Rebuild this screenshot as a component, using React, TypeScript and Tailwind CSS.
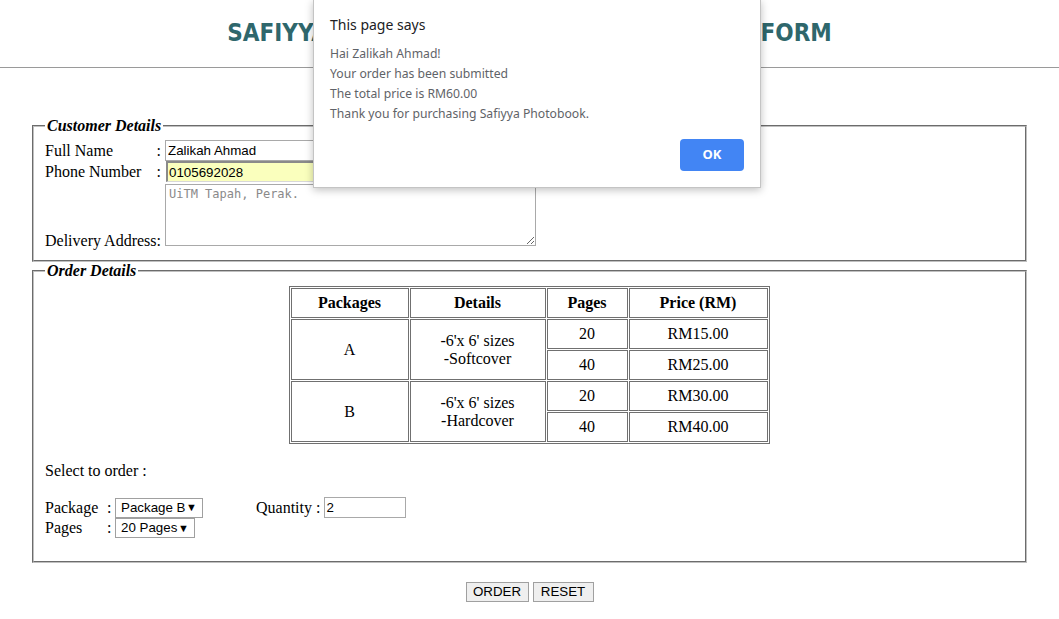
import React from "react";

const cell =
  "border border-[#707070] px-[5px] py-[5px] text-center leading-[18px] align-middle";

function FakeSelect({ label, width }: { label: string; width: string }) {
  return (
    <span
      className={`inline-flex h-[20px] items-center justify-between border border-[#a0a0a0] bg-white pl-[5px] pr-[5px] font-['Liberation_Sans',sans-serif] text-[13.33px] leading-none text-black ${width}`}
    >
      <span>{label}</span>
      <span className="text-[11px]">▼</span>
    </span>
  );
}

export default function App() {
  return (
    <div className="relative h-[619px] w-[1059px] overflow-hidden bg-white font-['Liberation_Serif',serif] text-[16px] text-black">
      <header className="pt-[19px] text-center">
        <h1 className="font-['DejaVu_Sans',sans-serif] text-[24px] font-bold leading-[28px] text-[#2f676c] font-stretch-condensed [word-spacing:18px]">
          SAFIYYA PHOTOBOOK ONLINE ORDER FORM
        </h1>
      </header>
      <hr className="mt-[20px] border-0 border-t border-[#9a9a9a]" />

      <main className="mt-[49px] px-[30px]">
        <fieldset className="mx-[2px] border-2 border-[#c0c0c0] pb-[10px] pl-[11px] pr-[12px] pt-[5px] [--tw-border-style:groove]">
          <legend className="px-[2px] font-bold italic leading-[18px]">Customer Details</legend>
          <div className="grid grid-cols-[120px_auto]">
            <div className="flex h-[21px] items-center justify-between pr-[4px]">
              <span>Full Name</span>
              <span>:</span>
            </div>
            <input
              readOnly
              value="Zalikah Ahmad"
              className="block h-[21px] w-[173px] border border-[#a9a9a9] px-[2px] font-['Liberation_Sans',sans-serif] text-[13.33px] text-black outline-none"
            />
            <div className="flex h-[21px] items-center justify-between pr-[4px]">
              <span>Phone Number</span>
              <span>:</span>
            </div>
            <input
              readOnly
              value="0105692028"
              className="ml-[1px] block h-[21px] w-[173px] border-b border-l-2 border-r border-t-2 border-b-[#d8d8d8] border-l-[#8a8a8a] border-r-[#d8d8d8] border-t-[#8a8a8a] bg-[#faffbd] px-[1px] font-['Liberation_Sans',sans-serif] text-[13.33px] text-black outline-none"
            />
            <div className="flex h-[68px] items-end leading-[18px]">
              <span>Delivery Address:</span>
            </div>
            <div className="pt-[2px]">
              <textarea
                readOnly
                placeholder="UiTM Tapah, Perak."
                className="block h-[62px] w-[371px] border border-[#a9a9a9] px-[3px] py-[2px] font-['DejaVu_Sans_Mono',monospace] text-[12px] leading-[15px] text-black outline-none placeholder:text-[#8a8a8a]"
              />
            </div>
          </div>
        </fieldset>

        <fieldset className="mx-[2px] border-2 border-[#c0c0c0] pb-[23px] pl-[11px] pr-[12px] pt-[6px] [--tw-border-style:groove]">
          <legend className="px-[2px] font-bold italic leading-[18px]">Order Details</legend>
          <table className="mx-auto border-separate border-spacing-[1px] border border-[#707070]">
            <thead>
              <tr>
                <th className={`${cell} w-[118px]`}>Packages</th>
                <th className={`${cell} w-[136px]`}>Details</th>
                <th className={`${cell} w-[81px]`}>Pages</th>
                <th className={`${cell} w-[139px]`}>Price (RM)</th>
              </tr>
            </thead>
            <tbody>
              <tr>
                <td rowSpan={2} className={cell}>A</td>
                <td rowSpan={2} className={cell}>
                  -6'x 6' sizes
                  <br />
                  -Softcover
                </td>
                <td className={cell}>20</td>
                <td className={cell}>RM15.00</td>
              </tr>
              <tr>
                <td className={cell}>40</td>
                <td className={cell}>RM25.00</td>
              </tr>
              <tr>
                <td rowSpan={2} className={cell}>B</td>
                <td rowSpan={2} className={cell}>
                  -6'x 6' sizes
                  <br />
                  -Hardcover
                </td>
                <td className={cell}>20</td>
                <td className={cell}>RM30.00</td>
              </tr>
              <tr>
                <td className={cell}>40</td>
                <td className={cell}>RM40.00</td>
              </tr>
            </tbody>
          </table>

          <div className="mt-[18px] leading-[18px]">Select to order :</div>

          <div className="mt-[17px] flex h-[21px] items-center">
            <span className="w-[62px]">Package</span>
            <span className="w-[8px]">:</span>
            <FakeSelect label="Package B" width="w-[88px]" />
            <span className="ml-[53px]">Quantity :</span>
            <input
              readOnly
              value="2"
              className="ml-[4px] h-[21px] w-[82px] border border-[#a9a9a9] px-[1px] font-['Liberation_Sans',sans-serif] text-[13.33px] text-black outline-none"
            />
          </div>
          <div className="flex h-[20px] items-center">
            <span className="w-[62px]">Pages</span>
            <span className="w-[8px]">:</span>
            <FakeSelect label="20 Pages" width="w-[80px]" />
          </div>
        </fieldset>

        <div className="mt-[19px] flex justify-center gap-[4px]">
          <button className="h-[20px] w-[63px] border border-[#a0a0a0] bg-[#efefef] font-['Liberation_Sans',sans-serif] text-[13.33px] leading-none text-black">
            ORDER
          </button>
          <button className="h-[20px] w-[61px] border border-[#a0a0a0] bg-[#efefef] font-['Liberation_Sans',sans-serif] text-[13.33px] leading-none text-black">
            RESET
          </button>
        </div>
      </main>

      <div className="absolute left-[313px] top-0 flex w-[448px] flex-col border-x border-b border-[#c4c4c4] bg-white px-[16px] pb-[16px] pt-[15px] font-['Noto_Sans',sans-serif] shadow-[0_2px_8px_rgba(0,0,0,0.25)]">
        <div className="text-[14px] leading-[20px] text-[#202124]">This page says</div>
        <div className="mt-[9px] text-[12.2px] leading-[20px] text-[#5f6368]">
          <div>Hai Zalikah Ahmad!</div>
          <div>Your order has been submitted</div>
          <div>The total price is RM60.00</div>
          <div>Thank you for purchasing Safiyya Photobook.</div>
        </div>
        <div className="mt-[15px] flex justify-end">
          <button className="h-[32px] w-[64px] rounded-[4px] bg-[#4285f4] text-[13px] font-bold text-white">
            OK
          </button>
        </div>
      </div>
    </div>
  );
}
